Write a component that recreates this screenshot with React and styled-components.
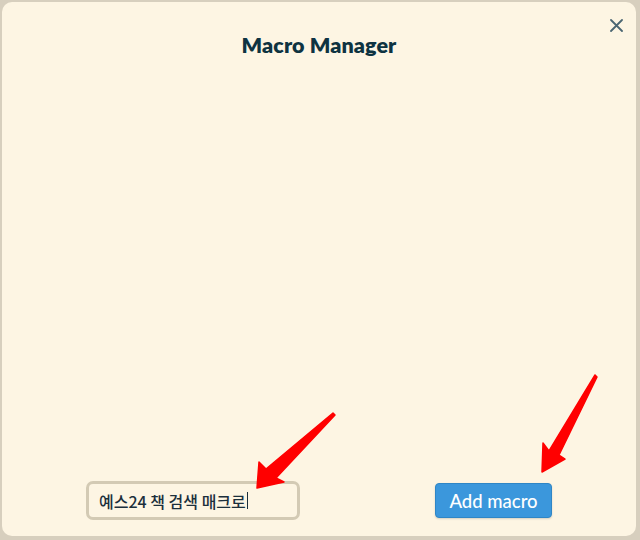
import React from 'react';
import styled, { createGlobalStyle } from 'styled-components';

const GlobalStyle = createGlobalStyle`
  html, body {
    margin: 0;
    padding: 0;
    background: #d7cfbe;
  }
  body {
    font-family: Lato, "Noto Sans", "Noto Sans CJK KR", sans-serif;
  }
`;

const Modal = styled.div`
  position: relative;
  margin: 2px;
  width: 634px;
  height: 534px;
  box-sizing: border-box;
  border-radius: 10px;
  background: #fdf5e3;
  display: flex;
  flex-direction: column;
`;

const Header = styled.header`
  display: flex;
  justify-content: center;
  padding-top: 30px;
`;

const Title = styled.h1`
  margin: 0;
  font-size: 21.5px;
  line-height: 26px;
  font-weight: 800;
  color: #0e3341;
  letter-spacing: 0.1px;
`;

const CloseButton = styled.button`
  position: absolute;
  top: 13px;
  right: 10px;
  width: 20px;
  height: 20px;
  padding: 0;
  border: none;
  background: transparent;
  display: flex;
  align-items: center;
  justify-content: center;
  cursor: pointer;
`;

const Body = styled.main`
  flex: 1;
`;

const Footer = styled.footer`
  display: flex;
  align-items: center;
  justify-content: space-between;
  padding: 0 84px 16px;
`;

const InputBox = styled.div`
  width: 214px;
  height: 39px;
  box-sizing: border-box;
  border: 3px solid #d3cab4;
  border-radius: 7px;
  display: flex;
  align-items: center;
  padding-left: 10px;
  font-family: "Noto Sans CJK KR", "Noto Sans", sans-serif;
  font-size: 16px;
  font-weight: 500;
  color: #1b2f3c;
`;

const Caret = styled.span`
  display: inline-block;
  width: 1px;
  height: 17px;
  margin-left: 1px;
  background: #1b2f3c;
`;

const AddButton = styled.button`
  width: 117px;
  height: 35px;
  box-sizing: border-box;
  border: 1px solid #2f86c6;
  border-radius: 4px;
  background: #3b97dc;
  color: #ffffff;
  font-family: Lato, "Noto Sans", sans-serif;
  font-size: 18.5px;
  font-weight: 500;
  box-shadow: 0 1px 2px rgba(0, 0, 0, 0.15);
  cursor: pointer;
`;

const Annotations = styled.svg`
  position: absolute;
  left: -2px;
  top: -2px;
  pointer-events: none;
`;

const Arrow = ({ points }) => (
  <polygon points={points} fill="#ff0000" stroke="#ff0000" strokeWidth="1.5" strokeLinejoin="round" />
);

export default function App() {
  return (
    <>
      <GlobalStyle />
      <Modal>
        <Header>
          <Title>Macro Manager</Title>
        </Header>
        <CloseButton aria-label="Close">
          <svg width="13" height="13" viewBox="0 0 13 13">
            <path d="M1 1 L12 12 M12 1 L1 12" stroke="#4b6672" strokeWidth="1.8" strokeLinecap="round" />
          </svg>
        </CloseButton>
        <Body />
        <Footer>
          <InputBox>
            예스24 책 검색 매크로
            <Caret />
          </InputBox>
          <AddButton>Add macro</AddButton>
        </Footer>
        <Annotations width="640" height="540" viewBox="0 0 640 540">
          <Arrow points="257,488 259,462 266,469 333,413 335,415 276,478 284,482" />
          <Arrow points="542,472 543,443 549,451 595,375 597,377 559,455 565,459" />
        </Annotations>
      </Modal>
    </>
  );
}
